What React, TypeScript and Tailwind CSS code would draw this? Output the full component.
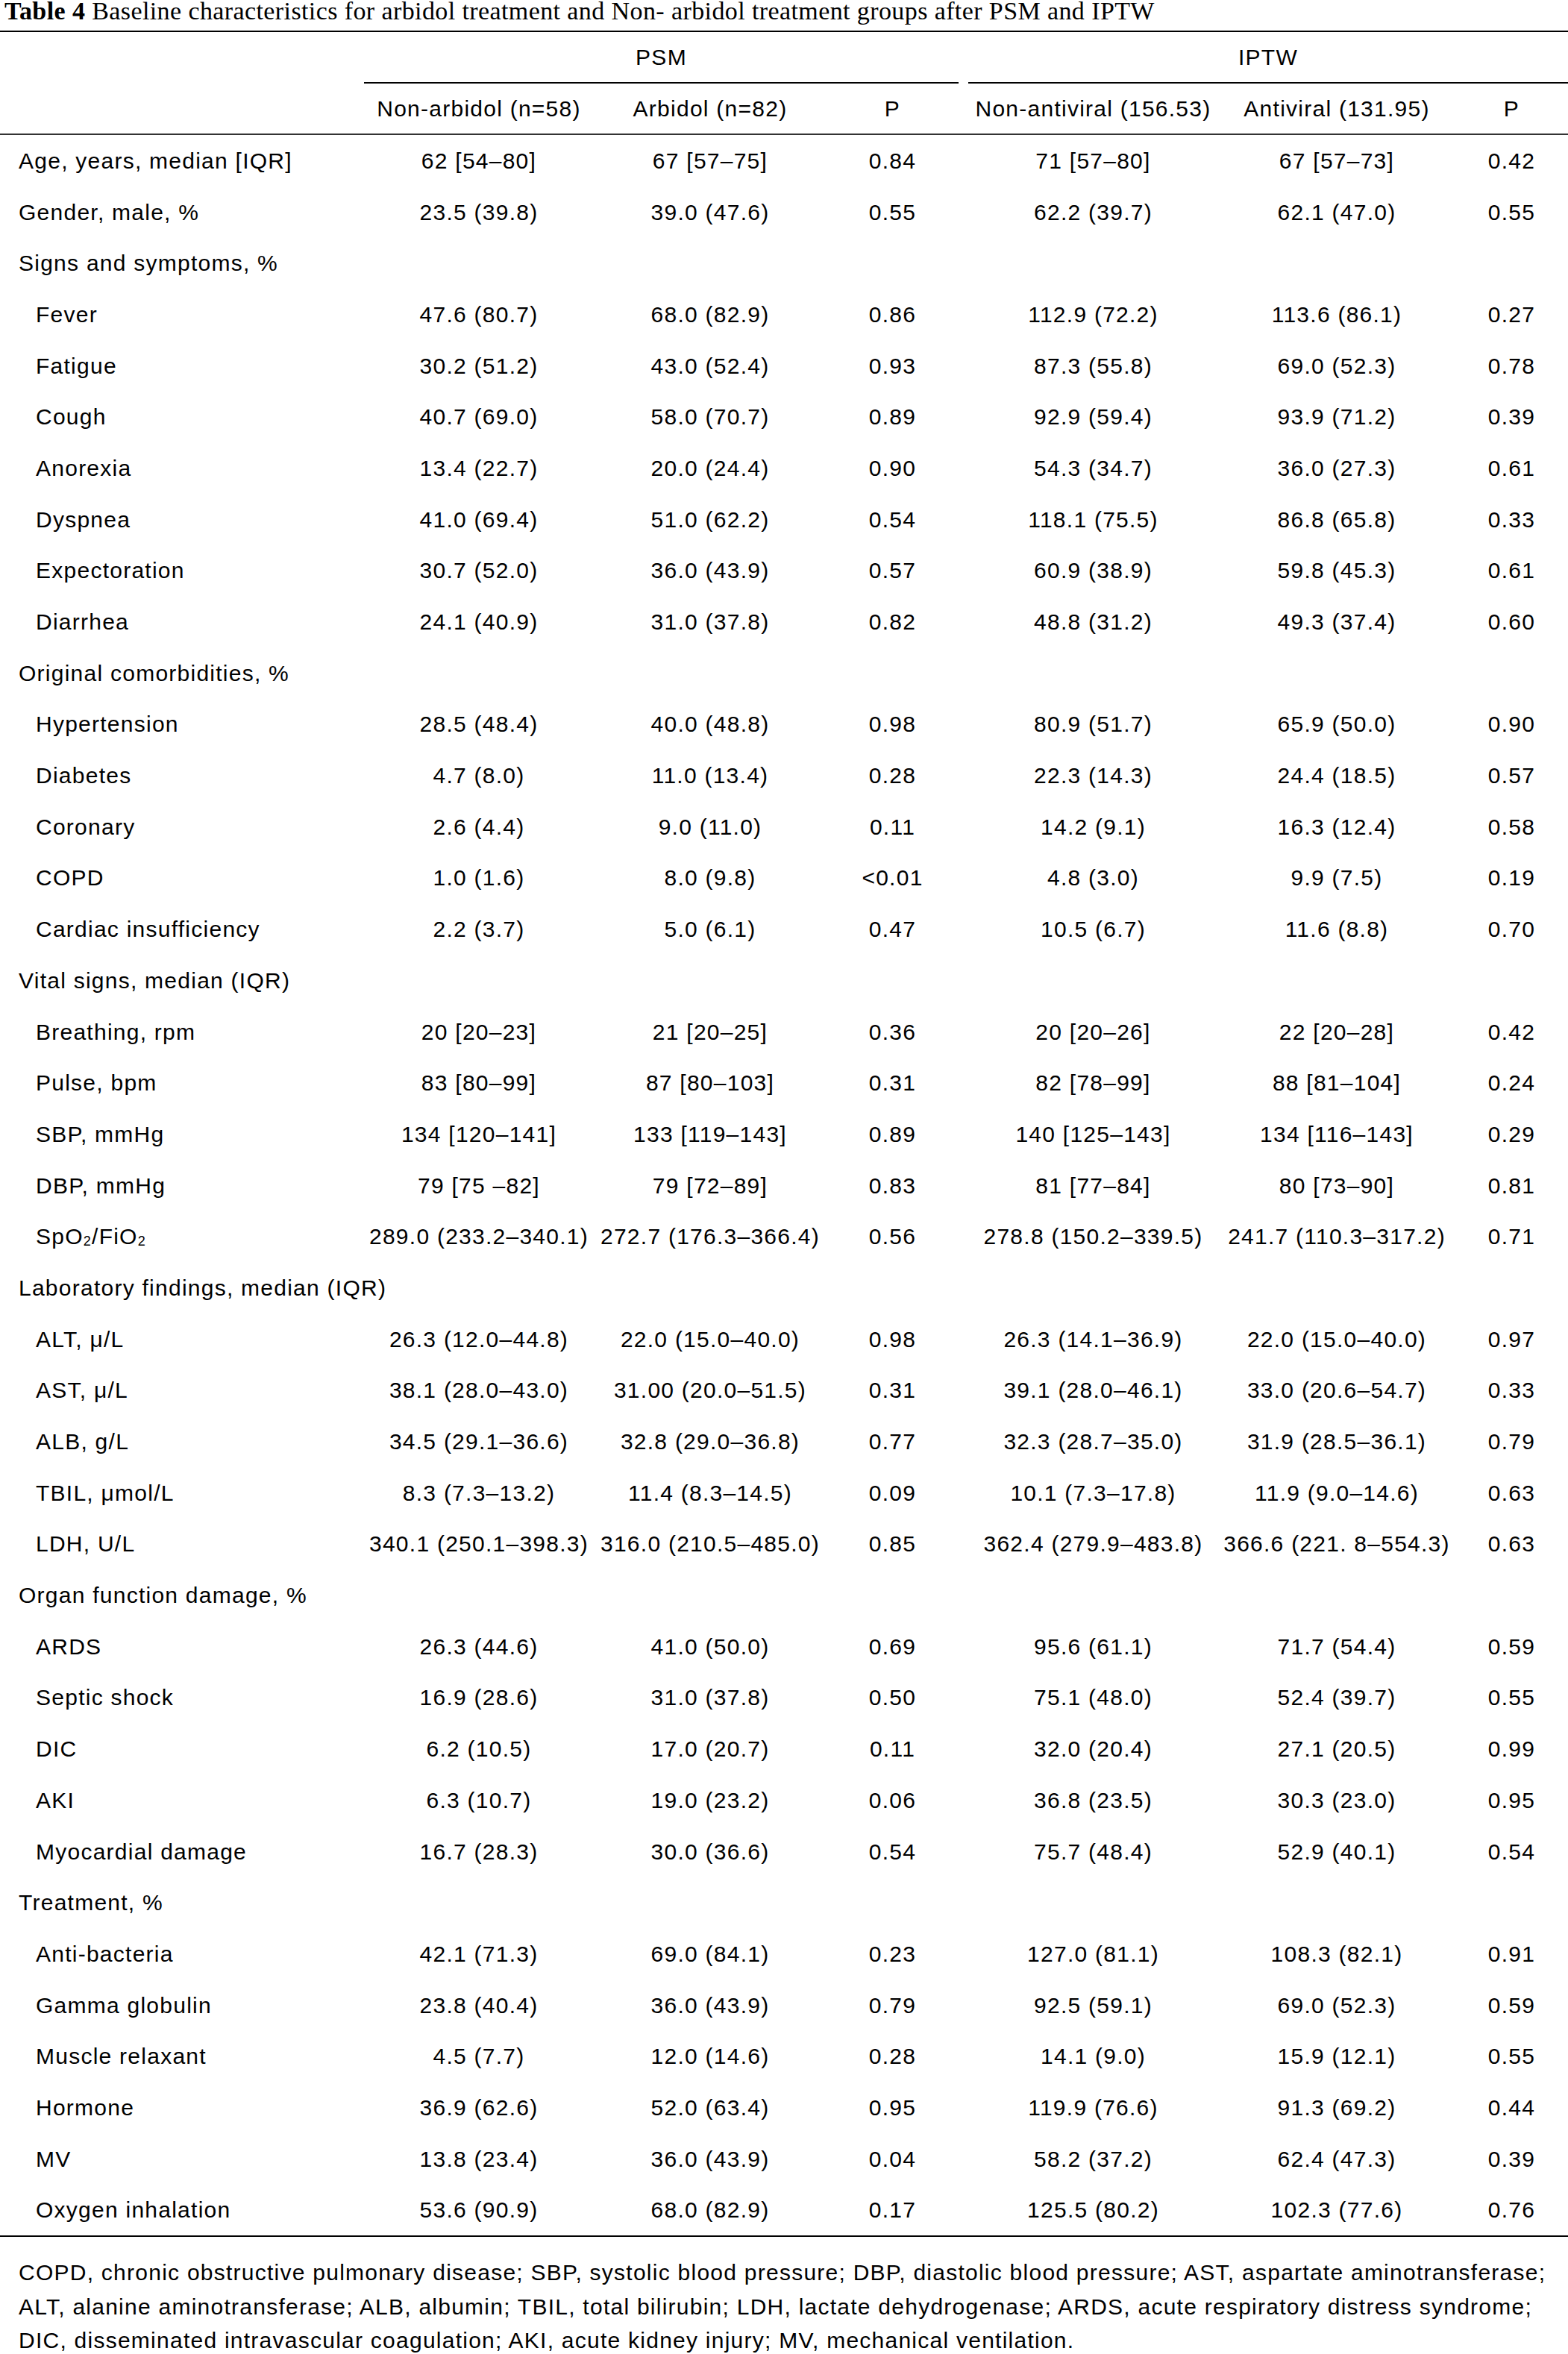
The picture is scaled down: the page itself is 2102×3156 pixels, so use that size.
import type { ReactNode } from "react";

type Vals = [string, string, string, string, string, string];

type Row =
  | { kind: "section"; label: string }
  | { kind: "data"; label: ReactNode; indent?: boolean; v: Vals };

const sec = (label: string): Row => ({ kind: "section", label });
const top = (label: ReactNode, ...v: string[]): Row => ({ kind: "data", label, v: v as Vals });
const sub = (label: ReactNode, ...v: string[]): Row => ({ kind: "data", label, indent: true, v: v as Vals });

const rows: Row[] = [
  top("Age, years, median [IQR]", "62 [54–80]", "67 [57–75]", "0.84", "71 [57–80]", "67 [57–73]", "0.42"),
  top("Gender, male, %", "23.5 (39.8)", "39.0 (47.6)", "0.55", "62.2 (39.7)", "62.1 (47.0)", "0.55"),
  sec("Signs and symptoms, %"),
  sub("Fever", "47.6 (80.7)", "68.0 (82.9)", "0.86", "112.9 (72.2)", "113.6 (86.1)", "0.27"),
  sub("Fatigue", "30.2 (51.2)", "43.0 (52.4)", "0.93", "87.3 (55.8)", "69.0 (52.3)", "0.78"),
  sub("Cough", "40.7 (69.0)", "58.0 (70.7)", "0.89", "92.9 (59.4)", "93.9 (71.2)", "0.39"),
  sub("Anorexia", "13.4 (22.7)", "20.0 (24.4)", "0.90", "54.3 (34.7)", "36.0 (27.3)", "0.61"),
  sub("Dyspnea", "41.0 (69.4)", "51.0 (62.2)", "0.54", "118.1 (75.5)", "86.8 (65.8)", "0.33"),
  sub("Expectoration", "30.7 (52.0)", "36.0 (43.9)", "0.57", "60.9 (38.9)", "59.8 (45.3)", "0.61"),
  sub("Diarrhea", "24.1 (40.9)", "31.0 (37.8)", "0.82", "48.8 (31.2)", "49.3 (37.4)", "0.60"),
  sec("Original comorbidities, %"),
  sub("Hypertension", "28.5 (48.4)", "40.0 (48.8)", "0.98", "80.9 (51.7)", "65.9 (50.0)", "0.90"),
  sub("Diabetes", "4.7 (8.0)", "11.0 (13.4)", "0.28", "22.3 (14.3)", "24.4 (18.5)", "0.57"),
  sub("Coronary", "2.6 (4.4)", "9.0 (11.0)", "0.11", "14.2 (9.1)", "16.3 (12.4)", "0.58"),
  sub("COPD", "1.0 (1.6)", "8.0 (9.8)", "<0.01", "4.8 (3.0)", "9.9 (7.5)", "0.19"),
  sub("Cardiac insufficiency", "2.2 (3.7)", "5.0 (6.1)", "0.47", "10.5 (6.7)", "11.6 (8.8)", "0.70"),
  sec("Vital signs, median (IQR)"),
  sub("Breathing, rpm", "20 [20–23]", "21 [20–25]", "0.36", "20 [20–26]", "22 [20–28]", "0.42"),
  sub("Pulse, bpm", "83 [80–99]", "87 [80–103]", "0.31", "82 [78–99]", "88 [81–104]", "0.24"),
  sub("SBP, mmHg", "134 [120–141]", "133 [119–143]", "0.89", "140 [125–143]", "134 [116–143]", "0.29"),
  sub("DBP, mmHg", "79 [75 –82]", "79 [72–89]", "0.83", "81 [77–84]", "80 [73–90]", "0.81"),
  sub(
    <>
      SpO<sub className="text-[0.6em] relative top-[0.35em] align-baseline">2</sub>/FiO
      <sub className="text-[0.6em] relative top-[0.35em] align-baseline">2</sub>
    </>,
    "289.0 (233.2–340.1)", "272.7 (176.3–366.4)", "0.56", "278.8 (150.2–339.5)", "241.7 (110.3–317.2)", "0.71"
  ),
  sec("Laboratory findings, median (IQR)"),
  sub("ALT, μ/L", "26.3 (12.0–44.8)", "22.0 (15.0–40.0)", "0.98", "26.3 (14.1–36.9)", "22.0 (15.0–40.0)", "0.97"),
  sub("AST, μ/L", "38.1 (28.0–43.0)", "31.00 (20.0–51.5)", "0.31", "39.1 (28.0–46.1)", "33.0 (20.6–54.7)", "0.33"),
  sub("ALB, g/L", "34.5 (29.1–36.6)", "32.8 (29.0–36.8)", "0.77", "32.3 (28.7–35.0)", "31.9 (28.5–36.1)", "0.79"),
  sub("TBIL, μmol/L", "8.3 (7.3–13.2)", "11.4 (8.3–14.5)", "0.09", "10.1 (7.3–17.8)", "11.9 (9.0–14.6)", "0.63"),
  sub("LDH, U/L", "340.1 (250.1–398.3)", "316.0 (210.5–485.0)", "0.85", "362.4 (279.9–483.8)", "366.6 (221. 8–554.3)", "0.63"),
  sec("Organ function damage, %"),
  sub("ARDS", "26.3 (44.6)", "41.0 (50.0)", "0.69", "95.6 (61.1)", "71.7 (54.4)", "0.59"),
  sub("Septic shock", "16.9 (28.6)", "31.0 (37.8)", "0.50", "75.1 (48.0)", "52.4 (39.7)", "0.55"),
  sub("DIC", "6.2 (10.5)", "17.0 (20.7)", "0.11", "32.0 (20.4)", "27.1 (20.5)", "0.99"),
  sub("AKI", "6.3 (10.7)", "19.0 (23.2)", "0.06", "36.8 (23.5)", "30.3 (23.0)", "0.95"),
  sub("Myocardial damage", "16.7 (28.3)", "30.0 (36.6)", "0.54", "75.7 (48.4)", "52.9 (40.1)", "0.54"),
  sec("Treatment, %"),
  sub("Anti-bacteria", "42.1 (71.3)", "69.0 (84.1)", "0.23", "127.0 (81.1)", "108.3 (82.1)", "0.91"),
  sub("Gamma globulin", "23.8 (40.4)", "36.0 (43.9)", "0.79", "92.5 (59.1)", "69.0 (52.3)", "0.59"),
  sub("Muscle relaxant", "4.5 (7.7)", "12.0 (14.6)", "0.28", "14.1 (9.0)", "15.9 (12.1)", "0.55"),
  sub("Hormone", "36.9 (62.6)", "52.0 (63.4)", "0.95", "119.9 (76.6)", "91.3 (69.2)", "0.44"),
  sub("MV", "13.8 (23.4)", "36.0 (43.9)", "0.04", "58.2 (37.2)", "62.4 (47.3)", "0.39"),
  sub("Oxygen inhalation", "53.6 (90.9)", "68.0 (82.9)", "0.17", "125.5 (80.2)", "102.3 (77.6)", "0.76"),
];

const cols = "grid grid-cols-[488px_308px_312px_177px_13px_335px_318px_151px]";

function Cell({ children }: { children?: ReactNode }) {
  return <div className="flex items-center justify-center whitespace-nowrap">{children}</div>;
}

function TableRow({ row }: { row: Row }) {
  if (row.kind === "section") {
    return (
      <div className={`${cols} h-[68.7px]`}>
        <div className="flex items-center whitespace-nowrap pl-[25px] col-span-8">{row.label}</div>
      </div>
    );
  }
  const [a, b, p1, c, d, p2] = row.v;
  return (
    <div className={`${cols} h-[68.7px]`}>
      <div className={`flex items-center whitespace-nowrap ${row.indent ? "pl-[48px]" : "pl-[25px]"}`}>{row.label}</div>
      <Cell>{a}</Cell>
      <Cell>{b}</Cell>
      <Cell>{p1}</Cell>
      <div />
      <Cell>{c}</Cell>
      <Cell>{d}</Cell>
      <Cell>{p2}</Cell>
    </div>
  );
}

export default function App() {
  return (
    <div className="w-[2102px] bg-white text-black">
      <div className="h-[41px] pl-[6px] font-['Liberation_Serif',serif] text-[34px] tracking-[0.4px] leading-[30px] whitespace-nowrap">
        <span className="font-bold">Table 4</span> Baseline characteristics for arbidol treatment and Non- arbidol treatment groups after PSM and IPTW
      </div>
      <div className="h-[2px] bg-black" />

      <div className="font-['Liberation_Sans',Arial,sans-serif] text-[30px] tracking-[1.25px]">
        <div className={`${cols} h-[69px]`}>
          <div />
          <div className="col-span-3 flex items-center justify-center border-b-2 border-black">PSM</div>
          <div />
          <div className="col-span-3 flex items-center justify-center border-b-2 border-black">IPTW</div>
        </div>
        <div className={`${cols} h-[69px] border-b-2 border-[#333]`}>
          <div />
          <Cell>Non-arbidol (n=58)</Cell>
          <Cell>Arbidol (n=82)</Cell>
          <Cell>P</Cell>
          <div />
          <Cell>Non-antiviral (156.53)</Cell>
          <Cell>Antiviral (131.95)</Cell>
          <Cell>P</Cell>
        </div>

        <div className="border-b-2 border-black">
          {rows.map((r, i) => (
            <TableRow key={i} row={r} />
          ))}
        </div>

        <div className="pt-[25px] pl-[25px] leading-[45.5px] whitespace-nowrap">
          <div>COPD, chronic obstructive pulmonary disease; SBP, systolic blood pressure; DBP, diastolic blood pressure; AST, aspartate aminotransferase;</div>
          <div>ALT, alanine aminotransferase; ALB, albumin; TBIL, total bilirubin; LDH, lactate dehydrogenase; ARDS, acute respiratory distress syndrome;</div>
          <div>DIC, disseminated intravascular coagulation; AKI, acute kidney injury; MV, mechanical ventilation.</div>
        </div>
      </div>
    </div>
  );
}
